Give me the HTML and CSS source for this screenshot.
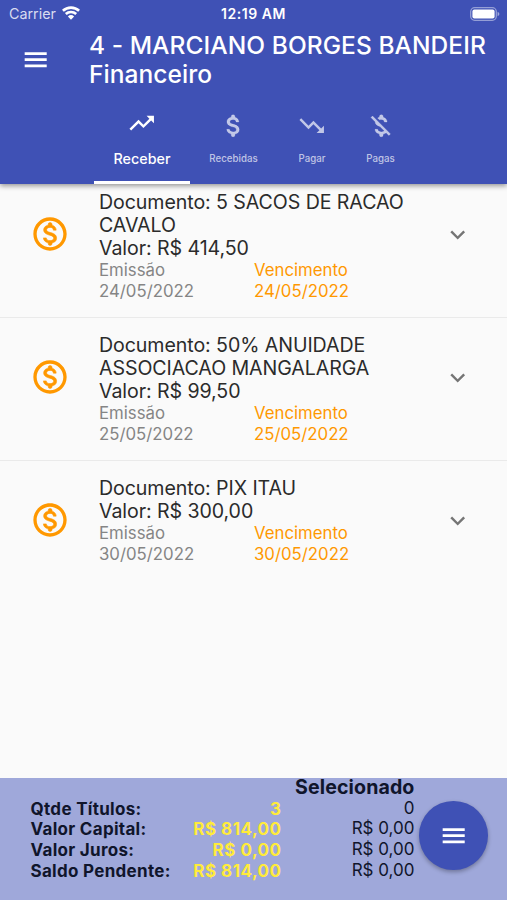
FILE: index.html
```html
<!DOCTYPE html>
<html lang="pt-BR">
<head>
<meta charset="utf-8">
<meta name="viewport" content="width=device-width, initial-scale=1">
<title>Financeiro</title>
<link rel="stylesheet" href="styles.css">
</head>
<body>
<svg class="defs" width="0" height="0" aria-hidden="true">
  <symbol id="menu" viewBox="0 0 24 24"><path d="M3 18.1h18v-2.2H3zM3 13.1h18v-2.2H3zM3 5.9v2.2h18V5.9z"/></symbol>
  <symbol id="up" viewBox="0 0 24 24"><path d="M16 6l2.29 2.29-4.88 4.88-4-4L2 16.59 3.41 18l6-6 4 4 6.3-6.29L22 12V6z"/></symbol>
  <symbol id="down" viewBox="0 0 24 24"><path d="M16 18l2.29-2.29-4.88-4.88-4 4L2 7.41 3.41 6l6 6 4-4 6.3 6.29L22 12v6z"/></symbol>
  <symbol id="money" viewBox="0 0 24 24"><path d="M11.8 10.9c-2.27-.59-3-1.2-3-2.15 0-1.09 1.01-1.85 2.7-1.85 1.78 0 2.44.85 2.5 2.1h2.21c-.07-1.72-1.12-3.3-3.21-3.81V4.5a1.5 1.5 0 0 0-3 0v.66c-1.94.42-3.5 1.68-3.5 3.61 0 2.31 1.91 3.46 4.7 4.13 2.5.6 3 1.48 3 2.41 0 .69-.49 1.79-2.7 1.79-2.06 0-2.87-.92-2.98-2.1h-2.2c.12 2.19 1.76 3.42 3.68 3.83v.67a1.5 1.5 0 0 0 3 0v-.65c1.95-.37 3.5-1.5 3.5-3.55 0-2.84-2.43-3.81-4.7-4.4z" stroke="currentColor" stroke-width=".25"/></symbol>
  <symbol id="money-off" viewBox="0 0 24 24"><path d="M12.5 6.9c1.78 0 2.44.85 2.5 2.1h2.21c-.07-1.72-1.12-3.3-3.21-3.81V4.5a1.5 1.5 0 0 0-3 0v.66c-.53.12-1.03.3-1.48.54l1.47 1.47c.41-.17.91-.27 1.51-.27zM5.33 4.06L4.06 5.33 7.5 8.77c0 2.08 1.56 3.21 3.91 3.91l3.51 3.51c-.34.48-1.05.91-2.42.91-2.06 0-2.87-.92-2.98-2.1h-2.2c.12 2.19 1.76 3.42 3.68 3.83v.67a1.5 1.5 0 0 0 3 0v-.65c.96-.18 1.82-.55 2.45-1.12l2.22 2.22 1.27-1.27L5.33 4.06z" stroke="currentColor" stroke-width=".25"/></symbol>
  <symbol id="coin" viewBox="0 0 24 24"><path d="M12 2C6.48 2 2 6.48 2 12s4.48 10 10 10 10-4.48 10-10S17.52 2 12 2zm0 18c-4.41 0-8-3.59-8-8s3.59-8 8-8 8 3.59 8 8-3.59 8-8 8z"/><path d="M12.31 11.14c-1.77-.45-2.34-.94-2.34-1.67 0-.84.79-1.43 2.1-1.43 1.38 0 1.9.66 1.94 1.64h1.71c-.05-1.34-.87-2.57-2.49-2.97V6.3a1.16 1.16 0 0 0-2.33 0v.39c-1.51.32-2.72 1.3-2.72 2.81 0 1.79 1.49 2.69 3.66 3.21 1.95.46 2.34 1.15 2.34 1.87 0 .53-.39 1.39-2.1 1.39-1.6 0-2.23-.72-2.32-1.64H8.04c.1 1.7 1.36 2.66 2.86 2.97v.4a1.17 1.17 0 0 0 2.34 0v-.37c1.52-.29 2.72-1.16 2.73-2.77-.01-2.2-1.9-2.96-3.66-3.42z" stroke="currentColor" stroke-width=".35"/></symbol>
  <symbol id="expand" viewBox="0 0 24 24"><path d="M16.59 8.59L12 13.17 7.41 8.59 6 10l6 6 6-6z"/></symbol>
</svg>

<header class="header">
  <div class="status">
    <span class="carrier">Carrier</span>
    <svg class="wifi" viewBox="0 0 18 14"><path d="M.9 4.8a11.8 11.8 0 0 1 16.2 0M3.8 8a7.6 7.6 0 0 1 10.4 0" fill="none" stroke="currentColor" stroke-width="2.6"/><path d="M5.9 10.5a4.6 4.6 0 0 1 6.2 0L9 13.7z"/></svg>
    <span class="clock">12:19 AM</span>
    <svg class="battery" viewBox="0 0 30 14"><rect x=".7" y=".7" width="25.6" height="12.6" rx="4" fill="none" stroke="currentColor" stroke-width="1.3" opacity=".45"/><rect x="2.4" y="2.6" width="22.2" height="8.8" rx="2"/><path d="M27.6 4.8v4.4q1.8-.8 1.8-2.2t-1.8-2.2z" opacity=".5"/></svg>
  </div>
  <div class="bar">
    <svg class="icon menu"><use href="#menu"/></svg>
    <h1 class="title"><span class="client">4 - MARCIANO BORGES BANDEIR</span><br><span class="section">Financeiro</span></h1>
  </div>
  <nav class="tabs">
    <div class="tab active"><svg class="icon"><use href="#up"/></svg><span>Receber</span></div>
    <div class="tab recebidas"><svg class="icon"><use href="#money"/></svg><span>Recebidas</span></div>
    <div class="tab pagar"><svg class="icon"><use href="#down"/></svg><span>Pagar</span></div>
    <div class="tab pagas"><svg class="icon"><use href="#money-off"/></svg><span>Pagas</span></div>
  </nav>
</header>

<main class="list">
  <article class="item">
    <svg class="coin"><use href="#coin"/></svg>
    <div class="body">
      <div class="doc">Documento: 5 SACOS DE RACAO<br>CAVALO<br>Valor: R$ 414,50</div>
      <div class="dates"><div>Emissão<br>24/05/2022</div><div class="due">Vencimento<br>24/05/2022</div></div>
    </div>
    <svg class="icon chevron"><use href="#expand"/></svg>
  </article>
  <article class="item">
    <svg class="coin"><use href="#coin"/></svg>
    <div class="body">
      <div class="doc">Documento: 50% ANUIDADE<br>ASSOCIACAO MANGALARGA<br>Valor: R$ 99,50</div>
      <div class="dates"><div>Emissão<br>25/05/2022</div><div class="due">Vencimento<br>25/05/2022</div></div>
    </div>
    <svg class="icon chevron"><use href="#expand"/></svg>
  </article>
  <article class="item">
    <svg class="coin"><use href="#coin"/></svg>
    <div class="body">
      <div class="doc">Documento: PIX ITAU<br>Valor: R$ 300,00</div>
      <div class="dates"><div>Emissão<br>30/05/2022</div><div class="due">Vencimento<br>30/05/2022</div></div>
    </div>
    <svg class="icon chevron"><use href="#expand"/></svg>
  </article>
</main>

<footer class="summary">
  <div class="labels">Qtde Títulos:<br>Valor Capital:<br>Valor Juros:<br>Saldo Pendente:</div>
  <div class="totals">3<br>R$ 814,00<br>R$ 0,00<br>R$ 814,00</div>
  <div class="selected"><strong>Selecionado</strong><div>0<br>R$ 0,00<br>R$ 0,00<br>R$ 0,00</div></div>
  <div class="fab"><svg class="icon"><use href="#menu"/></svg></div>
</footer>
</body>
</html>
```
FILE: styles.css
```css
* { box-sizing: border-box; }
body {
  margin: 0;
  height: 900px;
  display: flex;
  flex-direction: column;
  overflow: hidden;
  background: #fafafa;
  font-family: Inter, "Liberation Sans", sans-serif;
  white-space: nowrap;
}
svg { display: block; flex: none; fill: currentColor; }
.defs { position: absolute; }
.icon { width: 29.4px; height: 29.4px; }

.header {
  position: relative;
  z-index: 1;
  flex: none;
  height: 184px;
  background: #3f51b5;
  color: #fff;
  box-shadow: 0 2px 5px rgba(0, 0, 0, .4);
}
.status {
  height: 27px;
  display: grid;
  grid-template-columns: 53px 168px 1fr 30px;
  align-items: center;
  padding: 0 7px 0 9px;
  font-size: 14.3px;
}
.carrier { color: #d9dcf0; }
.wifi { width: 18px; height: 14px; transform: translateY(-1px); }
.clock { font-weight: 600; font-size: 14px; letter-spacing: .55px; margin-left: -9px; }
.battery { width: 30px; height: 14px; }

.bar { display: flex; height: 70px; }
.menu { margin: 18px 39px 0 20.5px; }
.title {
  margin: 4px 0 0;
  font-size: 24.5px;
  line-height: 29px;
  font-weight: 500;
  letter-spacing: .07px;
}
.tabs { display: flex; height: 87px; padding-left: 94px; }
.tab {
  display: flex;
  flex-direction: column;
  align-items: center;
  padding-top: 14px;
  font-size: 9.7px;
  font-weight: 500;
  color: rgba(255, 255, 255, .68);
}
.tab span { height: 36px; line-height: 37px; }
.active { width: 96px; color: #fff; font-size: 14.3px; border-bottom: 3px solid #fff; }
.active .icon { transform: translateY(-2.5px); }
.recebidas { width: 87px; }
.pagar { width: 70px; }
.pagas { width: 67px; }

.list { flex: 1; min-height: 0; padding-top: 7px; }
.item {
  display: flex;
  align-items: flex-start;
  height: 143px;
  border-bottom: 1px solid #eaeaea;
}
.item:first-child { height: 127px; }
.item + .item { padding-top: 16px; }
.item:last-child { border-bottom: 0; }
.coin { width: 40px; height: 40px; margin: 23px 29px 0 30px; color: #ff9800; }
.body { width: 344px; }
.doc { font-size: 19.6px; line-height: 23.1px; letter-spacing: -.08px; color: #2b2b2b; }
.dates {
  display: grid;
  grid-template-columns: 155px 1fr;
  font-size: 16.8px;
  line-height: 20.7px;
  color: #858585;
}
.due { color: #ff9800; }
.chevron { margin-top: 28.5px; color: #757575; }

.summary {
  position: relative;
  flex: none;
  display: flex;
  height: 122px;
  padding-left: 30.5px;
  background: #9fa8da;
  font-size: 17px;
  line-height: 20.7px;
  color: #10152b;
}
.labels, .totals { padding-top: 20.5px; font-weight: 700; letter-spacing: .3px; }
.labels { width: 145px; }
.totals { width: 106px; text-align: right; color: #ffeb3b; letter-spacing: .5px; }
.selected { width: 133px; text-align: right; }
.selected strong { display: block; height: 19.5px; line-height: 19.5px; font-size: 19.6px; letter-spacing: .1px; }
.fab {
  display: grid;
  place-items: center;
  width: 68.5px;
  height: 68.5px;
  margin: 23px 0 0 4.5px;
  border-radius: 50%;
  background: #3f51b5;
  color: #fff;
  box-shadow: 0 2px 4px rgba(0, 0, 0, .3);
}
```
